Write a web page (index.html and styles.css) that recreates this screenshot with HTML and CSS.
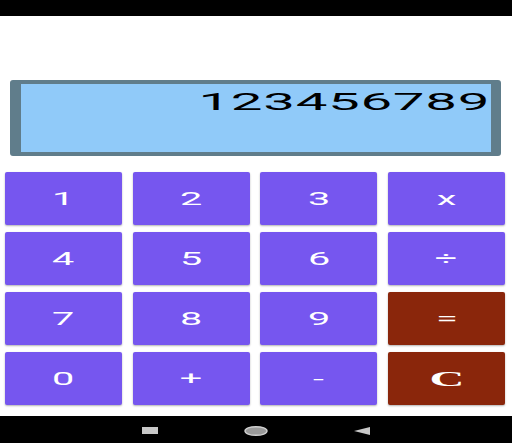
FILE: index.html
```html
<!DOCTYPE html>
<html lang="en">
<head>
  <meta charset="UTF-8">
  <meta name="viewport" content="width=device-width, initial-scale=1.0">
  <title>Calculator</title>
  <link rel="stylesheet" href="styles.css">
</head>
<body>
  <div class="screen">
    <div class="status-bar"></div>

    <div class="app">
      <div class="display">
        <span class="display-text">123456789</span>
      </div>

      <div class="keypad">
        <button class="key"><span>1</span></button>
        <button class="key"><span>2</span></button>
        <button class="key"><span>3</span></button>
        <button class="key"><span>x</span></button>
        <button class="key"><span>4</span></button>
        <button class="key"><span>5</span></button>
        <button class="key"><span>6</span></button>
        <button class="key"><span>÷</span></button>
        <button class="key"><span>7</span></button>
        <button class="key"><span>8</span></button>
        <button class="key"><span>9</span></button>
        <button class="key key-action"><span>=</span></button>
        <button class="key"><span>0</span></button>
        <button class="key"><span>+</span></button>
        <button class="key"><span>-</span></button>
        <button class="key key-action key-clear"><span>C</span></button>
      </div>
    </div>

    <div class="nav-bar">
      <span class="nav-recent"></span>
      <svg class="nav-home" width="24" height="10" viewBox="0 0 24 10">
        <ellipse cx="12" cy="5" rx="11" ry="4.3" fill="#9a9a9a" stroke="#d0d0d0" stroke-width="1.4"/>
      </svg>
      <svg class="nav-back" width="16" height="8" viewBox="0 0 16 8">
        <polygon points="0,4 16,0 16,8" fill="#c8c8c8"/>
      </svg>
    </div>
  </div>
</body>
</html>
```

FILE: styles.css
```css
* {
  box-sizing: border-box;
}
body {
  margin: 0;
  font-family: Roboto, "Liberation Sans", sans-serif;
  background: #fff;
}
.screen {
  height: 100vh;
  display: flex;
  flex-direction: column;
}
.status-bar {
  height: 16px;
  background: #000;
}
.app {
  flex: 1;
  display: flex;
  flex-direction: column;
}
.display {
  margin: 64px 11px 0 10px;
  height: 76px;
  background: #90caf9;
  border-style: solid;
  border-color: #607d8b;
  border-width: 4px 10px 4px 11px;
  border-radius: 3px;
  display: flex;
  justify-content: flex-end;
  align-items: flex-start;
  padding: 4px 1px 0 0;
}
.display-text {
  display: inline-block;
  font-size: 24px;
  line-height: 28px;
  color: #000;
  letter-spacing: 0.3px;
  transform: scaleX(2.35);
  transform-origin: right center;
}
.keypad {
  margin: 16px 7px 0 5px;
  display: grid;
  grid-template-columns: repeat(4, 1fr);
  grid-auto-rows: 53px;
  gap: 7px 10.67px;
}
.key {
  border: none;
  border-radius: 2px;
  background: #7656ef;
  color: #fff;
  font-family: Roboto, "Liberation Sans", sans-serif;
  font-weight: 400;
  font-size: 18px;
  box-shadow: 0 1px 2px rgba(0, 0, 0, 0.3);
  padding: 0;
  display: flex;
  justify-content: center;
  align-items: center;
}
.key span {
  display: inline-block;
  transform: scaleX(2.2);
}
.key-action {
  background: #8a260b;
}
.key-clear {
  font-family: "Liberation Serif", serif;
  font-weight: bold;
  font-size: 22px;
}
.nav-bar {
  height: 27px;
  background: #000;
  display: flex;
  justify-content: center;
  align-items: center;
  gap: 86px;
  padding-top: 2px;
}
.nav-recent {
  width: 16px;
  height: 7px;
  background: #c8c8c8;
}
```
